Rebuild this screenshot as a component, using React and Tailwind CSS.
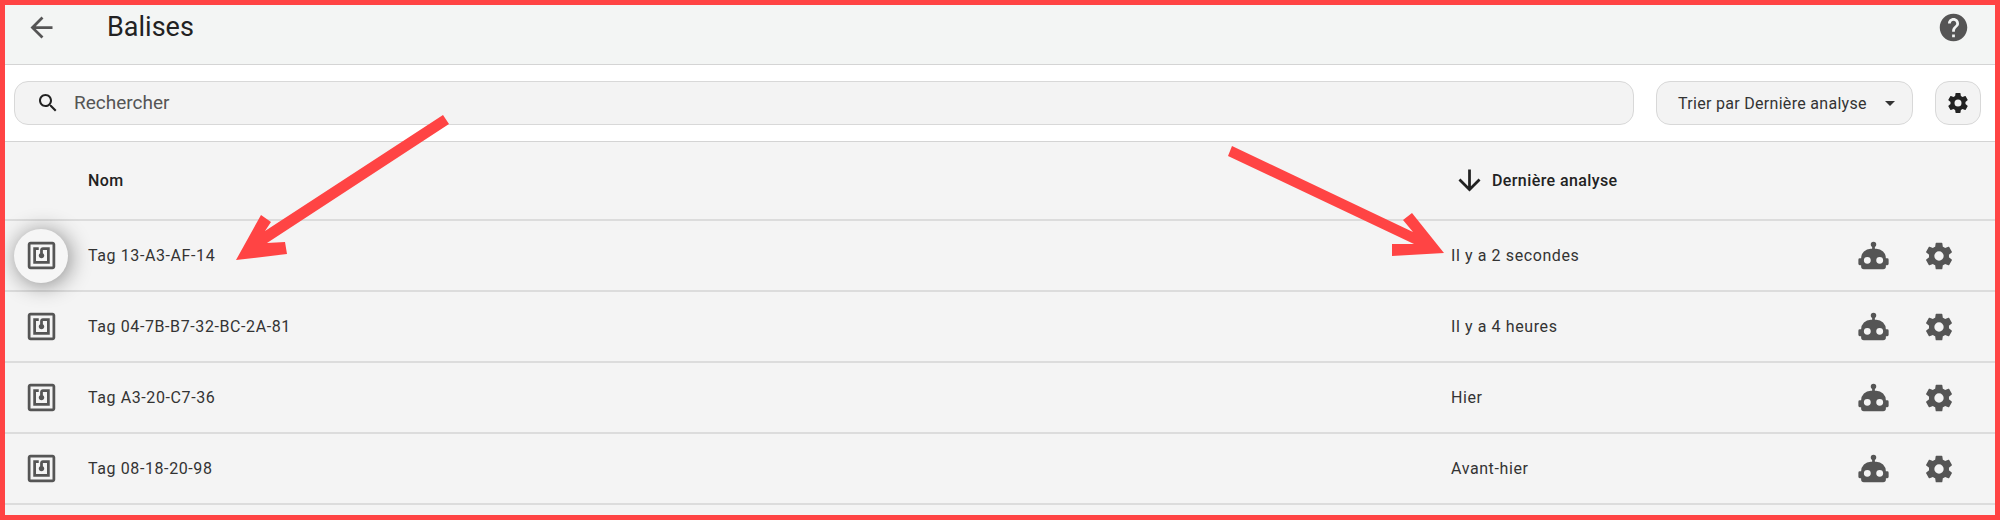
import React from 'react';

const NFC = "M20 2H4c-1.1 0-2 .9-2 2v16c0 1.1.9 2 2 2h16c1.1 0 2-.9 2-2V4c0-1.1-.9-2-2-2zm0 18H4V4h16v16zM18 6h-5c-1.1 0-2 .9-2 2v2.28c-.6.35-1 .98-1 1.72 0 1.1.9 2 2 2s2-.9 2-2c0-.74-.4-1.38-1-1.72V8h3v8H8V8h2V6H6v12h12V6z";
const ROBOT = "M12,2A2,2 0 0,1 14,4C14,4.74 13.6,5.39 13,5.73V7H14A7,7 0 0,1 21,14H22A1,1 0 0,1 23,15V18A1,1 0 0,1 22,19H21V20A2,2 0 0,1 19,22H5A2,2 0 0,1 3,20V19H2A1,1 0 0,1 1,18V15A1,1 0 0,1 2,14H3A7,7 0 0,1 10,7H11V5.73C10.4,5.39 10,4.74 10,4A2,2 0 0,1 12,2M7.5,13A2.5,2.5 0 0,0 5,15.5A2.5,2.5 0 0,0 7.5,18A2.5,2.5 0 0,0 10,15.5A2.5,2.5 0 0,0 7.5,13M16.5,13A2.5,2.5 0 0,0 14,15.5A2.5,2.5 0 0,0 16.5,18A2.5,2.5 0 0,0 19,15.5A2.5,2.5 0 0,0 16.5,13Z";
const COG = "M12,15.5A3.5,3.5 0 0,1 8.5,12A3.5,3.5 0 0,1 12,8.5A3.5,3.5 0 0,1 15.5,12A3.5,3.5 0 0,1 12,15.5M19.43,12.97C19.47,12.65 19.5,12.33 19.5,12C19.5,11.67 19.47,11.34 19.43,11L21.54,9.37C21.73,9.22 21.78,8.95 21.66,8.73L19.66,5.27C19.54,5.05 19.27,4.96 19.05,5.05L16.56,6.05C16.04,5.66 15.5,5.32 14.87,5.07L14.5,2.42C14.46,2.18 14.25,2 14,2H10C9.75,2 9.54,2.18 9.5,2.42L9.13,5.07C8.5,5.32 7.96,5.66 7.44,6.05L4.95,5.05C4.73,4.96 4.46,5.05 4.34,5.27L2.34,8.73C2.21,8.95 2.27,9.22 2.46,9.37L4.57,11C4.53,11.34 4.5,11.67 4.5,12C4.5,12.33 4.53,12.65 4.57,12.97L2.46,14.63C2.27,14.78 2.21,15.05 2.34,15.27L4.34,18.73C4.46,18.95 4.73,19.03 4.95,18.95L7.44,17.94C7.96,18.34 8.5,18.68 9.13,18.93L9.5,21.58C9.54,21.82 9.75,22 10,22H14C14.25,22 14.46,21.82 14.5,21.58L14.87,18.93C15.5,18.67 16.04,18.34 16.56,17.94L19.05,18.95C19.27,19.03 19.54,18.95 19.66,18.73L21.66,15.27C21.78,15.05 21.73,14.78 21.54,14.63L19.43,12.97Z";
const BACK = "M20 11H7.83l5.59-5.59L12 4l-8 8 8 8 1.41-1.41L7.83 13H20v-2z";
const DOWN = "M20 12l-1.41-1.41L13 16.17V4h-2v12.17l-5.58-5.59L4 12l8 8 8-8z";
const HELP = "M12 2C6.48 2 2 6.48 2 12s4.48 10 10 10 10-4.48 10-10S17.52 2 12 2zm1 17h-2v-2h2v2zm2.07-7.75l-.9.92C13.45 12.9 13 13.5 13 15h-2v-.5c0-1.1.45-2.1 1.17-2.83l1.24-1.26c.37-.36.59-.86.59-1.41 0-1.1-.9-2-2-2s-2 .9-2 2H8c0-2.21 1.79-4 4-4s4 1.79 4 4c0 .88-.36 1.68-.93 2.25z";
const SEARCH = "M15.5 14h-.79l-.28-.27C15.41 12.59 16 11.11 16 9.5 16 5.91 13.09 3 9.5 3S3 5.91 3 9.5 5.91 16 9.5 16c1.61 0 3.09-.59 4.23-1.57l.27.28v.79l5 4.99L20.49 19l-4.99-5zm-6 0C7.01 14 5 11.99 5 9.5S7.01 5 9.5 5 14 7.01 14 9.5 11.99 14 9.5 14z";

const Icon = ({ d, className }) => (
  <svg viewBox="0 0 24 24" fill="currentColor" className={className}>
    <path d={d} />
  </svg>
);

const rows = [
  { name: 'Tag 13-A3-AF-14', date: 'Il y a 2 secondes', active: true },
  { name: 'Tag 04-7B-B7-32-BC-2A-81', date: 'Il y a 4 heures' },
  { name: 'Tag A3-20-C7-36', date: 'Hier' },
  { name: 'Tag 08-18-20-98', date: 'Avant-hier' },
];

export default function App() {
  return (
    <div className="relative w-[2000px] h-[520px] overflow-hidden border-[5px] border-[#ff4444] bg-[#f4f4f4] font-['Roboto',sans-serif] text-[#333]">
      <header className="flex items-start h-[60px] bg-[#f3f5f4] border-b border-[#d4d4d4]">
        <div className="w-[72px] flex justify-center pt-[6px]">
          <Icon d={BACK} className="w-[33px] h-[33px] text-[#555]" />
        </div>
        <h1 className="ml-[30px] pt-[5px] text-[27px] leading-[34px] text-[#222]">Balises</h1>
        <Icon d={HELP} className="ml-auto mr-[25px] mt-[6px] w-[33px] h-[33px] text-[#555]" />
      </header>

      <div className="flex items-center h-[77px] pl-[9px] bg-white border-b border-[#d4d4d4]">
        <div className="flex items-center w-[1620px] h-[44px] rounded-[14px] bg-[#f3f3f3] border border-[#d8d8d8] pl-[21px]">
          <Icon d={SEARCH} className="w-[24px] h-[24px] text-[#222]" />
          <span className="ml-[14px] pt-[1px] text-[19px] text-[#555]">Rechercher</span>
        </div>
        <div className="flex items-center w-[257px] h-[44px] ml-[22px] rounded-[14px] bg-[#f3f3f3] border border-[#d8d8d8] pl-[21px]">
          <span className="pt-[1px] text-[16px] tracking-[0.3px] text-[#333]">Trier par Dernière analyse</span>
          <svg viewBox="0 0 10 5" className="ml-[18px] w-[10px] h-[5px] fill-[#333]">
            <path d="M0 0l5 5 5-5z" />
          </svg>
        </div>
        <div className="flex items-center justify-center w-[46px] h-[44px] ml-[22px] rounded-[14px] bg-[#f3f3f3] border border-[#d8d8d8]">
          <Icon d={COG} className="w-[24px] h-[24px] text-[#222]" />
        </div>
      </div>

      <div className="flex items-center h-[79px] border-b-2 border-[#dcdcdc] font-medium text-[16px] tracking-[0.4px] text-[#222]">
        <div className="w-[83px] pl-[83px]">
          <span>Nom</span>
        </div>
        <div className="flex items-center ml-[1365px]">
          <Icon d={DOWN} className="w-[33px] h-[33px] text-[#222]" />
          <span className="ml-[6px]">Dernière analyse</span>
        </div>
      </div>

      {rows.map((row) => (
        <div key={row.name} className="flex items-center h-[71px] border-b-2 border-[#dcdcdc] text-[16px] tracking-[0.6px]">
          <div className="flex justify-center w-[72px]">
            <div className={`flex items-center justify-center w-[54px] h-[54px] rounded-full ${row.active ? 'bg-[#f6f6f6] shadow-[2px_2px_22px_rgba(0,0,0,0.45)]' : ''}`}>
              <Icon d={NFC} className="w-[33px] h-[33px] text-[#555]" />
            </div>
          </div>
          <div className="w-[1374px] pl-[11px]">{row.name}</div>
          <div>{row.date}</div>
          <div className="flex items-center gap-[33px] ml-auto pr-[40px] text-[#555]">
            <Icon d={ROBOT} className="w-[33px] h-[33px]" />
            <Icon d={COG} className="w-[32px] h-[32px]" />
          </div>
        </div>
      ))}

      {/* annotation arrows, page coordinates minus the 5px frame */}
      <svg viewBox="5 5 1990 510" className="absolute inset-0 w-[1990px] h-[510px] fill-[#ff4444]">
        <polygon points="443,115 449,124 267,243 285,242 287,254 236,260 261,215 271,222 265,231" />
        <polygon points="1232,146 1413,232 1403,220 1412,213 1444,253 1392,256 1392,244 1414,244 1228,156" />
      </svg>
    </div>
  );
}
